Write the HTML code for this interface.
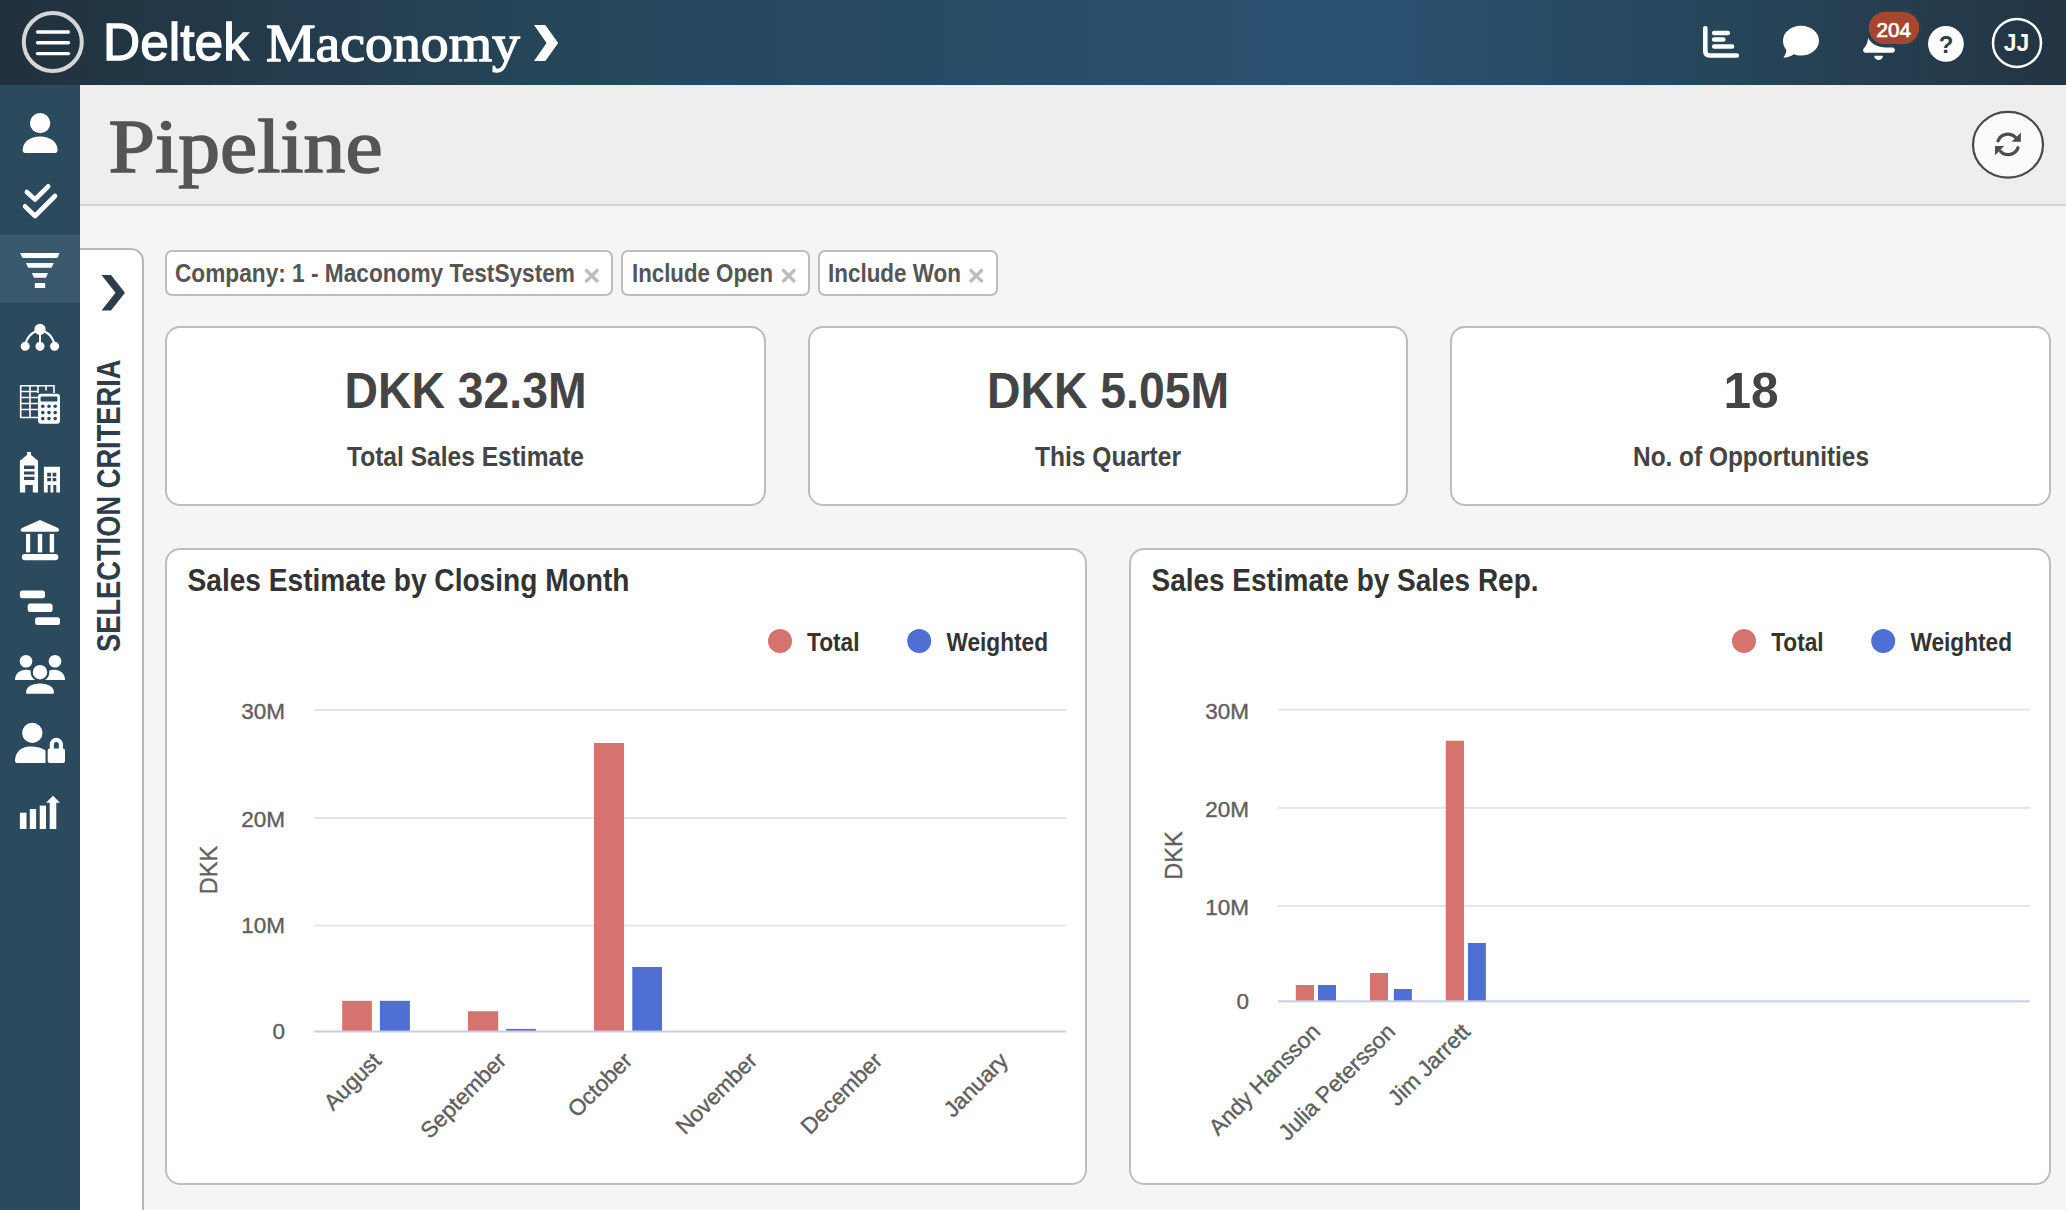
<!DOCTYPE html>
<html><head><meta charset="utf-8">
<style>
*{margin:0;padding:0}
html,body{width:2066px;height:1210px;overflow:hidden;background:#f5f5f5}
svg{display:block;font-family:"Liberation Sans",sans-serif}
</style></head>
<body>
<svg width="2066" height="1210" viewBox="0 0 2066 1210">
<defs>
 <linearGradient id="hg" x1="0" y1="0" x2="1" y2="0">
  <stop offset="0" stop-color="#21313d"/>
  <stop offset="0.27" stop-color="#26465a"/>
  <stop offset="0.66" stop-color="#2a5171"/>
  <stop offset="0.84" stop-color="#26455a"/>
  <stop offset="1" stop-color="#233442"/>
 </linearGradient>
</defs>
<!-- page bg -->
<rect x="0" y="0" width="2066" height="1210" fill="#f5f5f5"/>
<!-- header -->
<rect x="0" y="0" width="2066" height="85" fill="url(#hg)"/>
<!-- sidebar -->
<rect x="0" y="85" width="80" height="1125" fill="#2b4a5e"/>
<rect x="0" y="235" width="80" height="68" fill="#3a596d"/>
<!-- title bar -->
<rect x="80" y="85" width="1986" height="119" fill="#eeeeee"/>
<rect x="80" y="204" width="1986" height="2" fill="#d2d2d2"/>


<!-- header content -->
<circle cx="52.8" cy="42" r="29" fill="none" stroke="#d6d6d6" stroke-width="4"/>
<g stroke="#fff" stroke-width="3.4" stroke-linecap="round">
 <line x1="37.5" y1="32" x2="68.5" y2="32"/>
 <line x1="37.5" y1="42.8" x2="68.5" y2="42.8"/>
 <line x1="37.5" y1="53.6" x2="68.5" y2="53.6"/>
</g>
<text x="103" y="60" font-size="52" fill="#fff" stroke="#fff" stroke-width="1.3" textLength="146" lengthAdjust="spacingAndGlyphs">Deltek</text>
<text x="266" y="61" font-size="53.4" font-family="Liberation Serif" fill="#fff" stroke="#fff" stroke-width="1.3" textLength="254" lengthAdjust="spacingAndGlyphs">Maconomy</text>
<path d="M534 25 H545.3 L558.2 43 L545.3 61 H534 L546.6 43 Z" fill="#fff"/>

<!-- header right icons -->
<g fill="none" stroke="#fff" stroke-linecap="round">
 <path d="M1705.3 28.2 V51 Q1705.3 55.5 1709.8 55.5 H1736.8" stroke-width="4.6"/>
 <path d="M1714.2 33 H1727.8 M1714.2 39.5 H1723.3 M1714.2 46.5 H1732.1" stroke-width="4.6"/>
</g>
<path d="M1801 25.8 C1811 25.8 1819 32.5 1819 40.7 C1819 49 1811 55.6 1801 55.6 C1798.5 55.6 1796 55.2 1793.7 54.3 C1790.5 56.8 1786 57.8 1783.3 57.6 C1785.3 55 1786.5 52.6 1786.3 49.8 C1784 47.2 1783 44 1783 40.7 C1783 32.5 1791 25.8 1801 25.8 Z" fill="#fff"/>
<!-- bell -->
<path d="M1879 24 C1871 24 1868 30 1868 37 C1868 43 1866 46 1863.8 48.3 Q1862.6 49.7 1863.4 51.4 Q1864.1 52.8 1866 52.8 H1892 Q1893.9 52.8 1894.6 51.4 Q1895.4 49.7 1894.2 48.3 C1892 46 1890 43 1890 37 C1890 30 1887 24 1879 24 Z" fill="#fff"/>
<path d="M1874.2 55.8 H1883 A4.4 4.1 0 0 1 1874.2 55.8 Z" fill="#fff"/>
<rect x="1865.3" y="8.6" width="57" height="39" rx="19.5" fill="#26404f"/>
<rect x="1868.8" y="11.9" width="50.3" height="32.2" rx="16.1" fill="#a8452f"/>
<text x="1876.5" y="36.7" font-size="20.3" fill="#fff" stroke="#fff" stroke-width="0.7" textLength="34.5" lengthAdjust="spacingAndGlyphs">204</text>
<!-- help -->
<circle cx="1945.9" cy="43.9" r="17.9" fill="#fff"/>
<text x="1946" y="52.8" font-size="24" font-weight="bold" fill="#2b3f4f" text-anchor="middle">?</text>
<!-- avatar -->
<circle cx="2017" cy="42.9" r="24" fill="none" stroke="#fff" stroke-width="2.5"/>
<text x="2016.5" y="51.2" font-size="24.4" font-weight="bold" fill="#fff" text-anchor="middle" textLength="25.5" lengthAdjust="spacingAndGlyphs">JJ</text>
<!-- refresh button -->
<ellipse cx="2008" cy="144.8" rx="35" ry="32.9" fill="#fbfbfb" stroke="#4a4a4a" stroke-width="2.2"/>
<g fill="none" stroke="#4d4d4d" stroke-width="3.3" stroke-linecap="round">
 <path d="M1998 140.8 A10.6 10.6 0 0 1 2015.3 137.2"/>
 <path d="M2018 147.8 A10.6 10.6 0 0 1 2000.7 151.6"/>
</g>
<g fill="#4d4d4d">
 <path d="M2020.9 132.6 V141.8 H2011.7 Z"/>
 <path d="M1995 146 H2004.2 L1995 155.2 Z"/>
</g>

<!-- title -->
<text x="108.5" y="171.5" font-size="77" font-family="Liberation Serif" fill="#555" stroke="#555" stroke-width="1.6" textLength="274" lengthAdjust="spacingAndGlyphs">Pipeline</text>

<!-- selection panel -->
<path d="M80 249 H131 A12 12 0 0 1 143 261 V1212 H80 Z" fill="#fff"/>
<path d="M80 249 H131 A12 12 0 0 1 143 261 V1212" fill="none" stroke="#b8b8b8" stroke-width="2"/>


<!-- sidebar icons -->
<g fill="#fff">
 <!-- person -->
 <circle cx="40.1" cy="123.1" r="10.2"/>
 <path d="M22.7 150 C22.7 142 30 136.6 40.1 136.6 C50.2 136.6 57.5 142 57.5 150 Q57.5 153 55 153 H25.2 Q22.7 153 22.7 150 Z"/>
</g>
<g fill="none" stroke="#fff" stroke-width="4.6" stroke-linecap="round" stroke-linejoin="round">
 <path d="M26.8 192 L35 199.5 L48.2 186.3"/>
 <path d="M25 206.3 L35 216 L55 196"/>
</g>
<g fill="#fff">
 <!-- funnel -->
 <path d="M20.2 252.9 H59.6 L57.4 257.9 H22.4 Z"/>
 <path d="M26 263.1 H53.8 L51.6 267.8 H28.2 Z"/>
 <path d="M31.8 273 H48 L45.9 277.7 H34 Z"/>
 <rect x="34.8" y="283" width="10.4" height="5"/>
 <!-- hierarchy -->
 <circle cx="40" cy="329.3" r="5.6"/>
 <circle cx="25.2" cy="346.3" r="4.5"/>
 <circle cx="40" cy="346.3" r="4.5"/>
 <circle cx="54.6" cy="346.3" r="4.5"/>
</g>
<g fill="none" stroke="#fff" stroke-width="2">
 <path d="M40 330 V346"/>
 <path d="M25.2 346 Q27 333 40 330 Q53 333 54.6 346"/>
</g>
<!-- spreadsheet + calculator -->
<g fill="none" stroke="#fff" stroke-width="1.6">
 <path d="M20.7 418 V385.8 H54 V393"/>
 <path d="M20.7 391.5 H38 M20.7 397.5 H38 M20.7 403.5 H38 M20.7 409.5 H38 M20.7 417.5 H38"/>
 <path d="M30 385.8 V418 M38 385.8 V393 M46 385.8 V390.5"/>
</g>
<rect x="38" y="393.7" width="22" height="30.1" rx="3" fill="#fff"/>
<g fill="#2b4a5e">
 <rect x="40.6" y="396.6" width="16.8" height="5" rx="0.8"/>
 <circle cx="42.8" cy="406.3" r="1.8"/><circle cx="49" cy="406.3" r="1.8"/><circle cx="55.2" cy="406.3" r="1.8"/>
 <circle cx="42.8" cy="412.6" r="1.8"/><circle cx="49" cy="412.6" r="1.8"/><circle cx="55.2" cy="412.6" r="1.8"/>
 <circle cx="42.8" cy="418.6" r="1.8"/><circle cx="49" cy="418.6" r="1.8"/><circle cx="55.2" cy="418.6" r="1.8"/>
</g>
<!-- buildings -->
<path fill="#fff" fill-rule="evenodd" d="M19.9 492.6 V460.7 L27 455 V452 H31 V455 L38 460.7 V492.6 H32.8 V485 H25.2 V492.6 Z M24 465.6 V469 H34.5 V465.6 Z M24 471.4 V474.4 H34.5 V471.4 Z M24 476.7 V480 H34.5 V476.7 Z"/>
<path fill="#fff" fill-rule="evenodd" d="M43.9 492.6 V466.8 H60 V492.6 H56.3 V485 H53.3 V492.6 H50.5 V485 H47.7 V492.6 Z M47.2 472.7 V476.4 H51 V472.7 Z M52.6 472.7 V476.4 H56.3 V472.7 Z M47.2 478 V481.3 H51 V478 Z M52.6 478 V481.3 H56.3 V478 Z"/>
<!-- bank -->
<g fill="#fff">
 <path d="M40 520 L58 528 Q59.5 529 59 530.5 Q58.5 531.7 57 531.7 H22.5 Q21 531.7 20.7 530.3 Q20.5 529 22 528 Z"/>
 <rect x="26" y="533.9" width="4.2" height="18.5"/>
 <rect x="37.8" y="533.9" width="4.4" height="18.5"/>
 <rect x="49.7" y="533.9" width="4.4" height="18.5"/>
 <rect x="21.9" y="554" width="36.4" height="6.3" rx="3"/>
 <!-- gantt -->
 <rect x="19.9" y="590.4" width="25.1" height="7.9" rx="2.5"/>
 <rect x="27.7" y="603.6" width="24.9" height="8.4" rx="2.5"/>
 <rect x="35.1" y="617.2" width="24.9" height="7.8" rx="2.5"/>
</g>
<!-- group -->
<g fill="#fff" stroke="#2b4a5e" stroke-width="2.2">
 <circle cx="26" cy="661.2" r="6.3" stroke="none"/>
 <circle cx="55" cy="661.2" r="6.3" stroke="none"/>
 <path d="M15 680 C15 674 19.5 669.8 26 669.8 C32.5 669.8 37 674 37 680 Z" stroke="none"/>
 <path d="M43 680 C43 674 47.5 669.8 54 669.8 C60.5 669.8 65 674 65 680 Z" stroke="none"/>
 <circle cx="40" cy="672.2" r="8.3"/>
 <path d="M25 692.5 C25 686.5 31 682.3 40 682.3 C49 682.3 55 686.5 55 692.5 Q55 694.8 53 694.8 H27 Q25 694.8 25 692.5 Z"/>
</g>
<!-- person lock -->
<g fill="#fff">
 <circle cx="32.3" cy="732.9" r="10.2"/>
 <path d="M15 761 C15 752 21.5 746.6 30 746.6 C37 746.6 42 748 45.5 750.5 V763 H17 Q15 763 15 761 Z"/>
 <rect x="47.7" y="748.5" width="17.3" height="14.5" rx="2"/>
</g>
<path d="M51.8 749 V744.4 A4.55 4.55 0 0 1 60.9 744.4 V749" fill="none" stroke="#fff" stroke-width="4.1"/>
<!-- growth -->
<g fill="#fff">
 <rect x="19.9" y="812.7" width="6.6" height="16.3"/>
 <rect x="29.8" y="809" width="6.3" height="20"/>
 <rect x="39.75" y="805.6" width="6.25" height="23.4"/>
 <path d="M49.7 829 V802.8 H46 L53 795.7 L60 802.8 H56.3 V829 Z"/>
</g>
<!-- selection chevron + text -->
<path d="M101.5 275 H111 L125 292.8 L111 310.6 H101.5 L115.5 292.8 Z" fill="#2d3e4a"/>
<text transform="translate(120.2 652) rotate(-90)" font-size="32.7" font-weight="bold" fill="#2d3e4a" textLength="292.5" lengthAdjust="spacingAndGlyphs">SELECTION CRITERIA</text>

<!-- chips -->
<g fill="#fff" stroke="#bdbdbd" stroke-width="2">
 <rect x="166" y="251" width="446" height="44" rx="6"/>
 <rect x="622" y="251" width="187" height="44" rx="6"/>
 <rect x="819" y="251" width="178" height="44" rx="6"/>
</g>
<g font-weight="bold" font-size="25.7" fill="#555">
 <text x="175" y="282.2" textLength="400" lengthAdjust="spacingAndGlyphs">Company: 1 - Maconomy TestSystem</text>
 <text x="632" y="282.2" textLength="141" lengthAdjust="spacingAndGlyphs">Include Open</text>
 <text x="828" y="282.2" textLength="133" lengthAdjust="spacingAndGlyphs">Include Won</text>
</g>

<g stroke="#bcbcbc" stroke-width="3.2" stroke-linecap="butt">
 <path d="M585.5 269.5 L598 282 M598 269.5 L585.5 282"/>
 <path d="M782.5 269.5 L795 282 M795 269.5 L782.5 282"/>
 <path d="M970 269.5 L982.5 282 M982.5 269.5 L970 282"/>
</g>
<!-- KPI cards -->
<g fill="#fff" stroke="#bdbdbd" stroke-width="2">
 <rect x="166" y="327" width="599" height="178" rx="14"/>
 <rect x="809" y="327" width="598" height="178" rx="14"/>
 <rect x="1451" y="327" width="599" height="178" rx="14"/>
</g>
<g font-weight="bold" fill="#444" text-anchor="middle">
 <text x="465.5" y="408" font-size="49.6" textLength="242" lengthAdjust="spacingAndGlyphs">DKK 32.3M</text>
 <text x="1108" y="408" font-size="49.6" textLength="242" lengthAdjust="spacingAndGlyphs">DKK 5.05M</text>
 <text x="1751" y="408" font-size="49.6">18</text>
 <text x="465.5" y="466" font-size="27.6" textLength="237" lengthAdjust="spacingAndGlyphs">Total Sales Estimate</text>
 <text x="1108" y="466" font-size="27.6" textLength="146" lengthAdjust="spacingAndGlyphs">This Quarter</text>
 <text x="1751" y="466" font-size="27.6" textLength="236" lengthAdjust="spacingAndGlyphs">No. of Opportunities</text>
</g>

<!-- chart cards -->
<g fill="#fff" stroke="#bdbdbd" stroke-width="2">
 <rect x="166" y="549" width="920" height="635" rx="14"/>
 <rect x="1130" y="549" width="920" height="635" rx="14"/>
</g>

<!-- chart 1 -->
<text x="187.5" y="591" font-size="30.5" font-weight="bold" fill="#333" textLength="442" lengthAdjust="spacingAndGlyphs">Sales Estimate by Closing Month</text>
<circle cx="780" cy="641" r="12" fill="#d7736e"/><circle cx="919.2" cy="641" r="12" fill="#4f6fd4"/>
<g font-size="25.9" font-weight="bold" fill="#333"><text x="807" y="651.2" textLength="52.5" lengthAdjust="spacingAndGlyphs">Total</text><text x="946.5" y="651.2" textLength="101.5" lengthAdjust="spacingAndGlyphs">Weighted</text></g>
<rect x="314" y="709" width="752" height="2" fill="#e5e5e5"/>
<rect x="314" y="817" width="752" height="2" fill="#e5e5e5"/>
<rect x="314" y="924.5" width="752" height="2" fill="#e5e5e5"/>
<g font-size="22.5" fill="#5f5f5f" stroke="#5f5f5f" stroke-width="0.4" text-anchor="end">
<text x="285" y="718.8">30M</text>
<text x="285" y="826.8">20M</text>
<text x="285" y="933.3">10M</text>
<text x="285" y="1038.5">0</text>
</g>
<text transform="translate(216.5 870) rotate(-90)" font-size="23.5" fill="#5f5f5f" stroke="#5f5f5f" stroke-width="0.4" text-anchor="middle">DKK</text>
<rect x="342.2" y="1000.8" width="29.7" height="30.700000000000045" fill="#d7736e"/>
<rect x="379.9" y="1000.8" width="30" height="30.700000000000045" fill="#4f6fd4"/>
<rect x="467.9" y="1011.2" width="30.3" height="20.299999999999955" fill="#d7736e"/>
<rect x="506.2" y="1028.9" width="29.7" height="2.599999999999909" fill="#4f6fd4"/>
<rect x="594" y="743" width="30" height="288.5" fill="#d7736e"/>
<rect x="632.3" y="967" width="29.7" height="64.5" fill="#4f6fd4"/>
<rect x="314" y="1030.5" width="752" height="2" fill="#c6cde8"/>
<g font-size="22.5" fill="#5f5f5f" stroke="#5f5f5f" stroke-width="0.4" text-anchor="end">
<text transform="translate(382.5 1062.0) rotate(-45)">August</text>
<text transform="translate(507.5 1062.0) rotate(-45)">September</text>
<text transform="translate(633.5 1062.0) rotate(-45)">October</text>
<text transform="translate(758.5 1062.0) rotate(-45)">November</text>
<text transform="translate(883.5 1062.0) rotate(-45)">December</text>
<text transform="translate(1009.5 1062.0) rotate(-45)">January</text>
</g>
<!-- chart 2 -->
<text x="1151.5" y="591" font-size="30.5" font-weight="bold" fill="#333" textLength="387" lengthAdjust="spacingAndGlyphs">Sales Estimate by Sales Rep.</text>
<circle cx="1744" cy="641" r="12" fill="#d7736e"/><circle cx="1883.2" cy="641" r="12" fill="#4f6fd4"/>
<g font-size="25.9" font-weight="bold" fill="#333"><text x="1771.2" y="651.2" textLength="52.5" lengthAdjust="spacingAndGlyphs">Total</text><text x="1910.5" y="651.2" textLength="101.5" lengthAdjust="spacingAndGlyphs">Weighted</text></g>
<rect x="1278" y="708.6" width="752" height="2" fill="#e5e5e5"/>
<rect x="1278" y="806.8" width="752" height="2" fill="#e5e5e5"/>
<rect x="1278" y="904.9" width="752" height="2" fill="#e5e5e5"/>
<g font-size="22.5" fill="#5f5f5f" stroke="#5f5f5f" stroke-width="0.4" text-anchor="end">
<text x="1249" y="718.5">30M</text>
<text x="1249" y="816.5">20M</text>
<text x="1249" y="914.5">10M</text>
<text x="1249" y="1009">0</text>
</g>
<text transform="translate(1181.5 855.5) rotate(-90)" font-size="23.5" fill="#5f5f5f" stroke="#5f5f5f" stroke-width="0.4" text-anchor="middle">DKK</text>
<rect x="1295.8" y="985" width="18.2" height="16.299999999999955" fill="#d7736e"/>
<rect x="1318" y="985" width="18" height="16.299999999999955" fill="#4f6fd4"/>
<rect x="1370" y="973" width="18" height="28.299999999999955" fill="#d7736e"/>
<rect x="1393.9" y="989" width="18" height="12.299999999999955" fill="#4f6fd4"/>
<rect x="1445.7" y="740.7" width="18.3" height="260.5999999999999" fill="#d7736e"/>
<rect x="1468" y="943" width="17.9" height="58.299999999999955" fill="#4f6fd4"/>
<rect x="1278" y="1000.3" width="752" height="2" fill="#c6cde8"/>
<g font-size="22.5" fill="#5f5f5f" stroke="#5f5f5f" stroke-width="0.4" text-anchor="end">
<text transform="translate(1321.5 1033.0) rotate(-45)">Andy Hansson</text>
<text transform="translate(1396.5 1033.0) rotate(-45)">Julia Petersson</text>
<text transform="translate(1471.5 1033.0) rotate(-45)">Jim Jarrett</text>
</g>
</svg>
</body></html>
